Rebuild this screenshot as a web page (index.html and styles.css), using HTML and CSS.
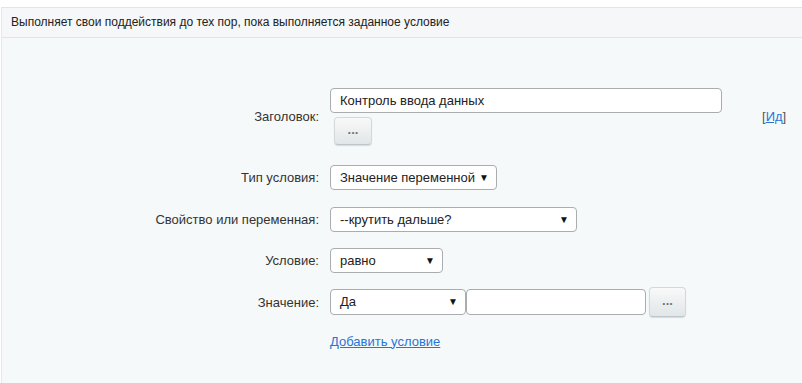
FILE: index.html
```html
<html>
<head>
    <meta charset="utf-8">
    <link rel="stylesheet" href="styles.css">
</head>
<body>
    <div class="panel">
        <div class="panel-head">Выполняет свои поддействия до тех пор, пока выполняется заданное условие</div>
        <div class="panel-body">
            <div class="form">
                <div class="row row-title">
                    <div class="label">Заголовок:</div>
                    <div class="field field-stack">
                        <div class="input input-title">Контроль ввода данных</div>
                        <button class="dots-btn dots-title">...</button>
                    </div>
                    <div class="extra"><span>[</span><a href="#">Ид</a><span>]</span></div>
                </div>
                <div class="row">
                    <div class="label">Тип условия:</div>
                    <div class="field">
                        <div class="select sel-type"><span>Значение переменной</span><span class="arrow">▼</span></div>
                    </div>
                </div>
                <div class="row">
                    <div class="label">Свойство или переменная:</div>
                    <div class="field">
                        <div class="select sel-prop"><span>--крутить дальше?</span><span class="arrow">▼</span></div>
                    </div>
                </div>
                <div class="row">
                    <div class="label">Условие:</div>
                    <div class="field">
                        <div class="select sel-cond"><span>равно</span><span class="arrow">▼</span></div>
                    </div>
                </div>
                <div class="row">
                    <div class="label">Значение:</div>
                    <div class="field field-inline">
                        <div class="select sel-value"><span>Да</span><span class="arrow">▼</span></div>
                        <div class="input input-value"></div>
                        <button class="dots-btn dots-value">...</button>
                    </div>
                </div>
                <div class="row row-link">
                    <div class="label"></div>
                    <div class="field"><a href="#">Добавить условие</a></div>
                </div>
            </div>
        </div>
    </div>
</body>
</html>
```

FILE: styles.css
```css
* {
    box-sizing: border-box;
}

body {
    margin: 0px;
    background-color: #fff;
    color: #222;
    font-family: "Liberation Sans", Arial, sans-serif;
    font-size: 13px;
}

a {
    color: #2675d7;
    text-decoration: underline;
}

.panel {
    margin-top: 7px;
    margin-left: 1px;
    border-top: 1px solid #dfe6e9;
    border-left: 1px solid #e3e9ec;
    background-color: #f5f9fa;
    height: 376px;
}

.panel-head {
    height: 30px;
    line-height: 29px;
    padding-left: 9px;
    font-size: 12px;
    background-color: #f5f7f8;
    border-bottom: 1px solid #dfe6e9;
}

.panel-body {
    padding-top: 50px;
}

.row {
    display: flex;
    align-items: center;
    height: 41.5px;
}

.row-title {
    height: 57px;
    margin-bottom: 12px;
}

.row-link {
    height: 36px;
}

.label {
    width: 317px;
    text-align: right;
    color: #333;
}

.field {
    margin-left: 11px;
    display: flex;
}

.field-stack {
    width: 392px;
    flex-direction: column;
    align-items: flex-start;
    gap: 4px;
}

.field-inline {
    align-items: center;
}

.extra {
    margin-left: 40px;
    color: #555;
}

.input,
.select {
    height: 25px;
    line-height: 23px;
    padding-left: 9px;
    background-color: #fff;
    border: 1px solid #a9adb0;
    border-radius: 4px;
    color: #222;
}

.input-title {
    width: 392px;
}

.select {
    display: flex;
    justify-content: space-between;
    padding-right: 7px;
}

.arrow {
    font-size: 10px;
    color: #111;
}

.sel-type {
    width: 167px;
}

.sel-prop {
    width: 247px;
}

.sel-cond {
    width: 113px;
}

.sel-value {
    width: 136px;
    height: 26px;
}

.input-value {
    width: 180px;
    height: 26px;
}

.dots-btn {
    font-family: "Liberation Sans", Arial, sans-serif;
    font-size: 13px;
    font-weight: bold;
    color: #6f7578;
    padding: 0px 0px 4px 0px;
    border: 1px solid #d3d9db;
    border-bottom-color: #bfc6c9;
    border-radius: 4px;
    background: linear-gradient(#f8f9f9, #e1e6e8);
    box-shadow: 0px 1px 1px rgba(0, 0, 0, 0.12);
}

.dots-title {
    width: 38px;
    height: 28px;
    margin-left: 4px;
}

.dots-value {
    width: 37px;
    height: 30px;
    margin-left: 3px;
}
```
